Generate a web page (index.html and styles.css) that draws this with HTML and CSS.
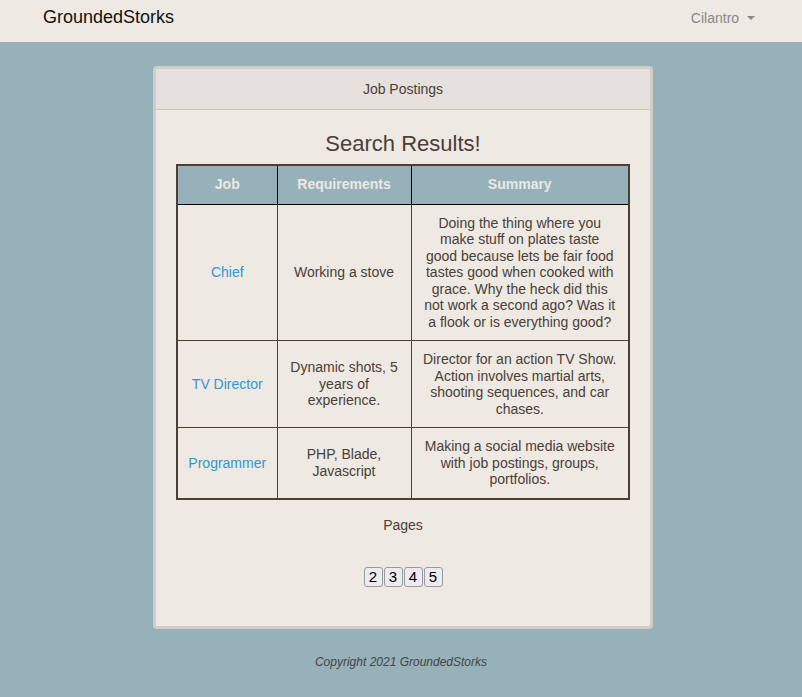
FILE: index.html
```html
<!DOCTYPE html>
<html>
<head>
<meta charset="utf-8">
<link rel="stylesheet" href="styles.css">
</head>
<body>
<nav class="navbar">
  <div class="nav-inner">
    <span class="brand">GroundedStorks</span>
    <span class="user">Cilantro <span class="caret"></span></span>
  </div>
</nav>
<main class="main">
  <section class="card">
    <div class="card-header">Job Postings</div>
    <div class="card-body">
      <h2 class="title">Search Results!</h2>
      <table class="results">
        <thead>
          <tr><th class="c-job">Job</th><th class="c-req">Requirements</th><th class="c-sum">Summary</th></tr>
        </thead>
        <tbody>
          <tr>
            <td><a class="job-link" href="#">Chief</a></td>
            <td>Working a stove</td>
            <td class="sum">Doing the thing where you make stuff on plates taste good because lets be fair food tastes good when cooked with grace. Why the heck did this not work a second ago? Was it a flook or is everything good?</td>
          </tr>
          <tr>
            <td><a class="job-link" href="#">TV Director</a></td>
            <td>Dynamic shots, 5 years of experience.</td>
            <td class="sum">Director for an action TV Show. Action involves martial arts, shooting sequences, and car chases.</td>
          </tr>
          <tr>
            <td><a class="job-link" href="#">Programmer</a></td>
            <td>PHP, Blade, Javascript</td>
            <td class="sum">Making a social media website with job postings, groups, portfolios.</td>
          </tr>
        </tbody>
      </table>
      <p class="pages-label">Pages</p>
      <div class="pager">
        <button class="page-btn">2</button><button class="page-btn">3</button><button class="page-btn">4</button><button class="page-btn">5</button>
      </div>
    </div>
  </section>
  <footer class="footer">Copyright 2021 GroundedStorks</footer>
</main>
</body>
</html>
```

FILE: styles.css
```css
* { box-sizing: border-box; }
html, body { margin: 0; padding: 0; }
body {
  background: #96b1ba;
  font-family: "Liberation Sans", Arial, sans-serif;
  font-size: 14px;
  color: #4a4037;
}
.navbar {
  background: #eee9e3;
  height: 42px;
}
.nav-inner {
  width: 720px;
  margin: 0 0 0 43px;
  height: 42px;
  display: flex;
  align-items: flex-start;
  justify-content: space-between;
}
.brand {
  font-size: 18px;
  color: #111;
  line-height: 20px;
  padding-top: 7px;
}
.user {
  font-size: 14px;
  color: #888;
  line-height: 16px;
  padding-top: 10px;
  padding-right: 8px;
  margin-left: -2px;
}
.caret {
  display: inline-block;
  width: 0;
  height: 0;
  margin-left: 4px;
  vertical-align: 3px;
  border-top: 4px solid #888;
  border-left: 4px solid transparent;
  border-right: 4px solid transparent;
}
.main {
  padding-top: 24px;
  display: flex;
  flex-direction: column;
  align-items: center;
}
.card {
  width: 500px;
  margin-left: 4px;
  border: 3px solid #d2cdc7;
  border-radius: 4px;
  background: #eee9e3;
}
.card-header {
  background: #e6e1dc;
  height: 41px;
  line-height: 40px;
  text-align: center;
  color: #4a4037;
  border-bottom: 1px solid #cbc6c0;
}
.card-body {
  padding: 21px 20px 39px;
  display: flex;
  flex-direction: column;
  align-items: center;
}
.title {
  margin: 0 0 8px;
  font-size: 22px;
  font-weight: normal;
  line-height: 25px;
  color: #4a4037;
}
.results {
  width: 454px;
  border-collapse: collapse;
  border: 2px solid #4a4037;
  text-align: center;
}
.results th {
  background: #96b1ba;
  color: #ede8e2;
  font-weight: bold;
  height: 39px;
  padding: 0 0 2px;
  border: 1px solid #000;
  border-top: none;
  line-height: 16px;
}
.c-job { width: 100px; }
.c-req { width: 134px; }
.results td {
  border: 1px solid #4a4037;
  padding: 10px 9px;
  line-height: 16.5px;
  vertical-align: middle;
}
.results td.sum {
  padding: 10px 11.5px;
}
.job-link {
  color: #3097d1;
  text-decoration: none;
}
.pages-label {
  margin: 17px 0 0;
  line-height: 16px;
}
.pager {
  margin-top: 34px;
  display: flex;
  gap: 1px;
}
.page-btn {
  font-family: "Liberation Sans", Arial, sans-serif;
  font-size: 15px;
  line-height: 18px;
  height: 20px;
  min-width: 19px;
  padding: 0 3px;
  border: 1px solid #9a9a9e;
  border-radius: 3px;
  background: #ecebef;
  color: #000;
}
.footer {
  margin-top: 26px;
  font-size: 12px;
  font-style: italic;
  color: #444;
  line-height: 14px;
}
```
